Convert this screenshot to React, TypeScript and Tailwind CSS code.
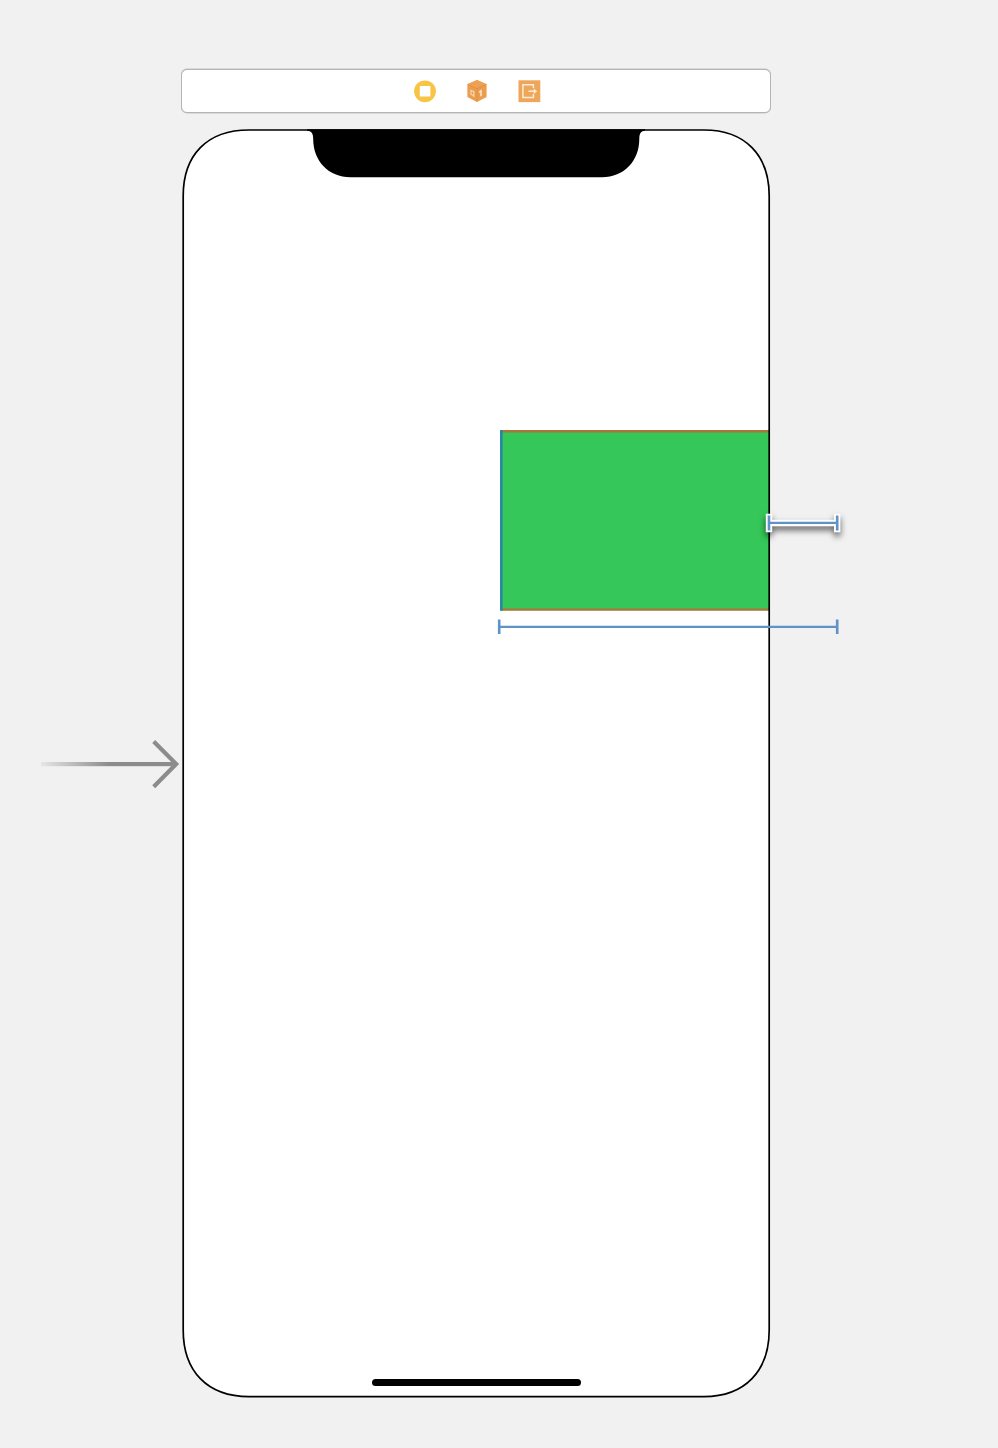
const BLUE = "#5f92c6";

function ViewControllerIcon() {
  return (
    <svg width="24" height="24" viewBox="0 0 24 24">
      <circle cx="12" cy="12.3" r="10.9" fill="#f8c445" />
      <rect x="6.8" y="7" width="10.6" height="10.6" rx="0.6" fill="#fff" />
    </svg>
  );
}

function FirstResponderIcon() {
  return (
    <svg width="24" height="24" viewBox="0 0 24 24">
      <path d="M12 .9 21.6 5.2V18L12 22.9 2.4 18V5.2Z" fill="#eb9c4c" />
      <path d="M12 .9 21.6 5.2 12 9.5 2.4 5.2Z" fill="#eea154" />
      <path d="M2.6 5.4 12 9.7 21.4 5.4M12 9.7V22.5" fill="none" stroke="#de8f42" strokeWidth="0.8" />
      <path d="M6 11.4 8.9 12.6V16.6L6 15.4ZM8 16.3 9.3 17.8" fill="none" stroke="#f8dcbd" strokeWidth="1.1" />
      <path d="M14.2 13.4 16 11.8V17.2" fill="none" stroke="#fbe6cf" strokeWidth="1.5" />
    </svg>
  );
}

function ExitIcon() {
  return (
    <svg width="24" height="24" viewBox="0 0 24 24">
      <rect x="1.5" y="1.3" width="21.8" height="21.8" fill="#eea65a" />
      <path d="M16.4 9.1V5.7H5.9V18.5H16.4V15.1" fill="none" stroke="#fcebd6" strokeWidth="1.5" />
      <path d="M11.5 12.2H18" stroke="#fcebd6" strokeWidth="1.5" />
      <path d="M16.7 9.4 20.2 12.2 16.7 15Z" fill="#fcebd6" />
    </svg>
  );
}

function SceneDock() {
  return (
    <header className="flex h-11 w-[590px] items-center justify-center gap-[28.2px] rounded-[6px] border border-[#b4b4b4] bg-white pl-[2px] shadow-[0_0.5px_0_0_#c4c4c4,0_-0.5px_0_0_#c4c4c4]">
      <ViewControllerIcon />
      <FirstResponderIcon />
      <ExitIcon />
    </header>
  );
}

const OUTLINE =
  "M249 130H704C745 130 769.2 155 769.2 196V1330C769.2 1371 745 1396.6 704 1396.6H249C207 1396.6 183.2 1371 183.2 1330V196C183.2 155 207 130 249 130Z";

function DeviceOutline() {
  return (
    <svg className="absolute inset-0" width="590" height="1270" viewBox="181 129 590 1270">
      <path d={OUTLINE} fill="#fff" />
      <rect x="501" y="431.5" width="268" height="178" fill="#35c759" />
      <path d="M501 431.2H769M501 609.6H769" stroke="#a97539" strokeWidth="2.4" />
      <path d="M501.3 430V610.8" stroke="#2386a0" strokeWidth="2.5" />
      <path d={OUTLINE} fill="none" stroke="#000" strokeWidth="1.7" />
      <path
        d="M307 129.2H645V130.8C641 130.8 639.3 133.5 639.3 139C639.3 161 624 177.2 602 177.2H350.5C328.5 177.2 313.2 161 313.2 139C313.2 133.5 311.5 130.8 307 130.8Z"
        fill="#000"
      />
    </svg>
  );
}

function EntryArrow() {
  return (
    <svg className="absolute top-[735px] left-[36px]" width="148" height="58" viewBox="36 735 148 58">
      <defs>
        <linearGradient id="fade" gradientUnits="userSpaceOnUse" x1="41" y1="0" x2="109" y2="0">
          <stop offset="0" stopColor="#e6e6e6" />
          <stop offset="1" stopColor="#8c8c8c" />
        </linearGradient>
      </defs>
      <rect x="41" y="762" width="135" height="4.2" fill="url(#fade)" />
      <path d="M153.7 741.5 176.2 764.1 153.7 786.7" fill="none" stroke="#8c8c8c" strokeWidth="4.2" />
    </svg>
  );
}

function Constraints() {
  return (
    <svg className="absolute top-[500px] left-[490px]" width="370" height="150" viewBox="490 500 370 150">
      <g className="drop-shadow-[0_4px_3px_rgba(0,0,0,0.6)]">
        <path d="M769 513.8V532.2M837.2 513.8V532.2M767 523H839" stroke="#fff" strokeWidth="6.4" />
      </g>
      <path d="M769 515.5V530.5M837.2 515.5V530.5" stroke={BLUE} strokeWidth="2.6" />
      <path d="M769 522.9H837" stroke={BLUE} strokeWidth="2.3" />
      <path d="M499.2 619.5V634M837.2 619.5V634" stroke={BLUE} strokeWidth="2.6" />
      <path d="M499 626.8H837" stroke={BLUE} strokeWidth="2.3" />
    </svg>
  );
}

export default function App() {
  return (
    <main className="relative flex h-[1448px] w-[998px] flex-col gap-4 overflow-hidden bg-[#f1f1f1] pt-[69px] pl-[181px]">
      <SceneDock />
      <section className="relative flex h-[1270px] w-[590px] flex-col items-center justify-end pb-[13px]">
        <DeviceOutline />
        <div className="relative h-[7px] w-[209px] rounded-full bg-black" />
      </section>
      <EntryArrow />
      <Constraints />
    </main>
  );
}
